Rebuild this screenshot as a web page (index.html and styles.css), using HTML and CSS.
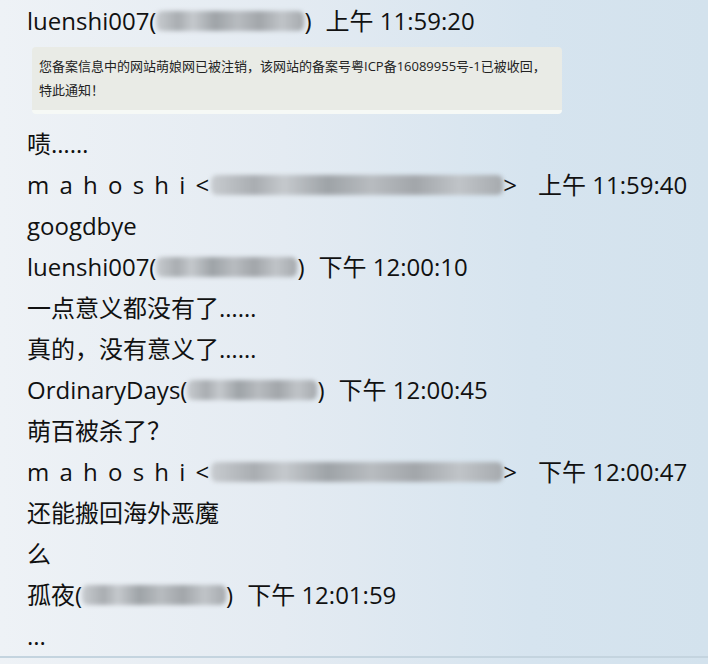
FILE: index.html
```html
<!DOCTYPE html>
<html lang="zh-CN">
  <head>
    <meta charset="UTF-8" />
    <meta name="viewport" content="width=device-width, initial-scale=1.0" />
    <title>聊天记录</title>
    <link rel="stylesheet" href="styles.css">
  </head>
  <body>
    <div class="log">
      <div class="line">luenshi007(<span class="blur w148"></span>)<span class="time">上午 11:59:20</span></div>

      <div class="notice">
        <p>您备案信息中的网站萌娘网已被注销，该网站的备案号粤ICP备16089955号-1已被收回，</p>
        <p>特此通知！</p>
      </div>

      <div class="line">啧……</div>
      <div class="line"><span class="spaced">m a h o s h i &lt;</span><span class="blur w295"></span>&gt;<span class="time wide">上午 11:59:40</span></div>
      <div class="line">googdbye</div>
      <div class="line">luenshi007(<span class="blur w141"></span>)<span class="time">下午 12:00:10</span></div>
      <div class="line">一点意义都没有了……</div>
      <div class="line">真的，没有意义了……</div>
      <div class="line">OrdinaryDays(<span class="blur w130"></span>)<span class="time">下午 12:00:45</span></div>
      <div class="line">萌百被杀了？</div>
      <div class="line"><span class="spaced">m a h o s h i &lt;</span><span class="blur w295"></span>&gt;<span class="time wide">下午 12:00:47</span></div>
      <div class="line">还能搬回海外恶魔</div>
      <div class="line">么</div>
      <div class="line">孤夜(<span class="blur w144"></span>)<span class="time">下午 12:01:59</span></div>
      <div class="line">...</div>
    </div>
  </body>
</html>
```

FILE: styles.css
```css
html, body {
  height: 100%;
}
body {
  margin: 0;
  overflow: hidden;
  font-family: "Open Sans", "Noto Sans CJK SC", sans-serif;
  color: #111;
  background: linear-gradient(90deg, #eef2f6 0%, #e4ebf2 40%, #d6e4ef 75%, #d3e2ed 100%);
}
.log {
  height: 658px;
  padding: 0 0 0 27px;
  border-bottom: 2px solid #c4d4df;
  box-sizing: border-box;
  display: flex;
  flex-direction: column;
}
.line {
  height: 41px;
  line-height: 41px;
  font-size: 24px;
  white-space: nowrap;
  display: flex;
  align-items: center;
}
.spaced {
  letter-spacing: 2px;
}
.time {
  margin-left: 14px;
}
.time.wide {
  margin-left: 21px;
}
.blur {
  display: inline-block;
  height: 20px;
  border-radius: 6px;
  filter: blur(2px);
  background: linear-gradient(90deg, #c8ccd0 0%, #a9adb1 15%, #c5c9cd 25%, #9ea3a7 40%, #b8bcc0 55%, #a2a6aa 70%, #c0c4c8 85%, #a6aaae 100%);
}
.w130 { width: 130px; }
.w141 { width: 141px; }
.w144 { width: 144px; }
.w148 { width: 148px; }
.w295 { width: 292px; }
.notice {
  margin: 6px 0 9px 5px;
  width: 530px;
  height: 68px;
  box-sizing: border-box;
  padding: 7px 0 0 7px;
  background: #e9ebe6;
  border-radius: 4px;
  border-bottom: 4px solid #f6f9f6;
  font-size: 13px;
  color: #222;
}
.notice p {
  margin: 0;
  line-height: 24px;
}
```
